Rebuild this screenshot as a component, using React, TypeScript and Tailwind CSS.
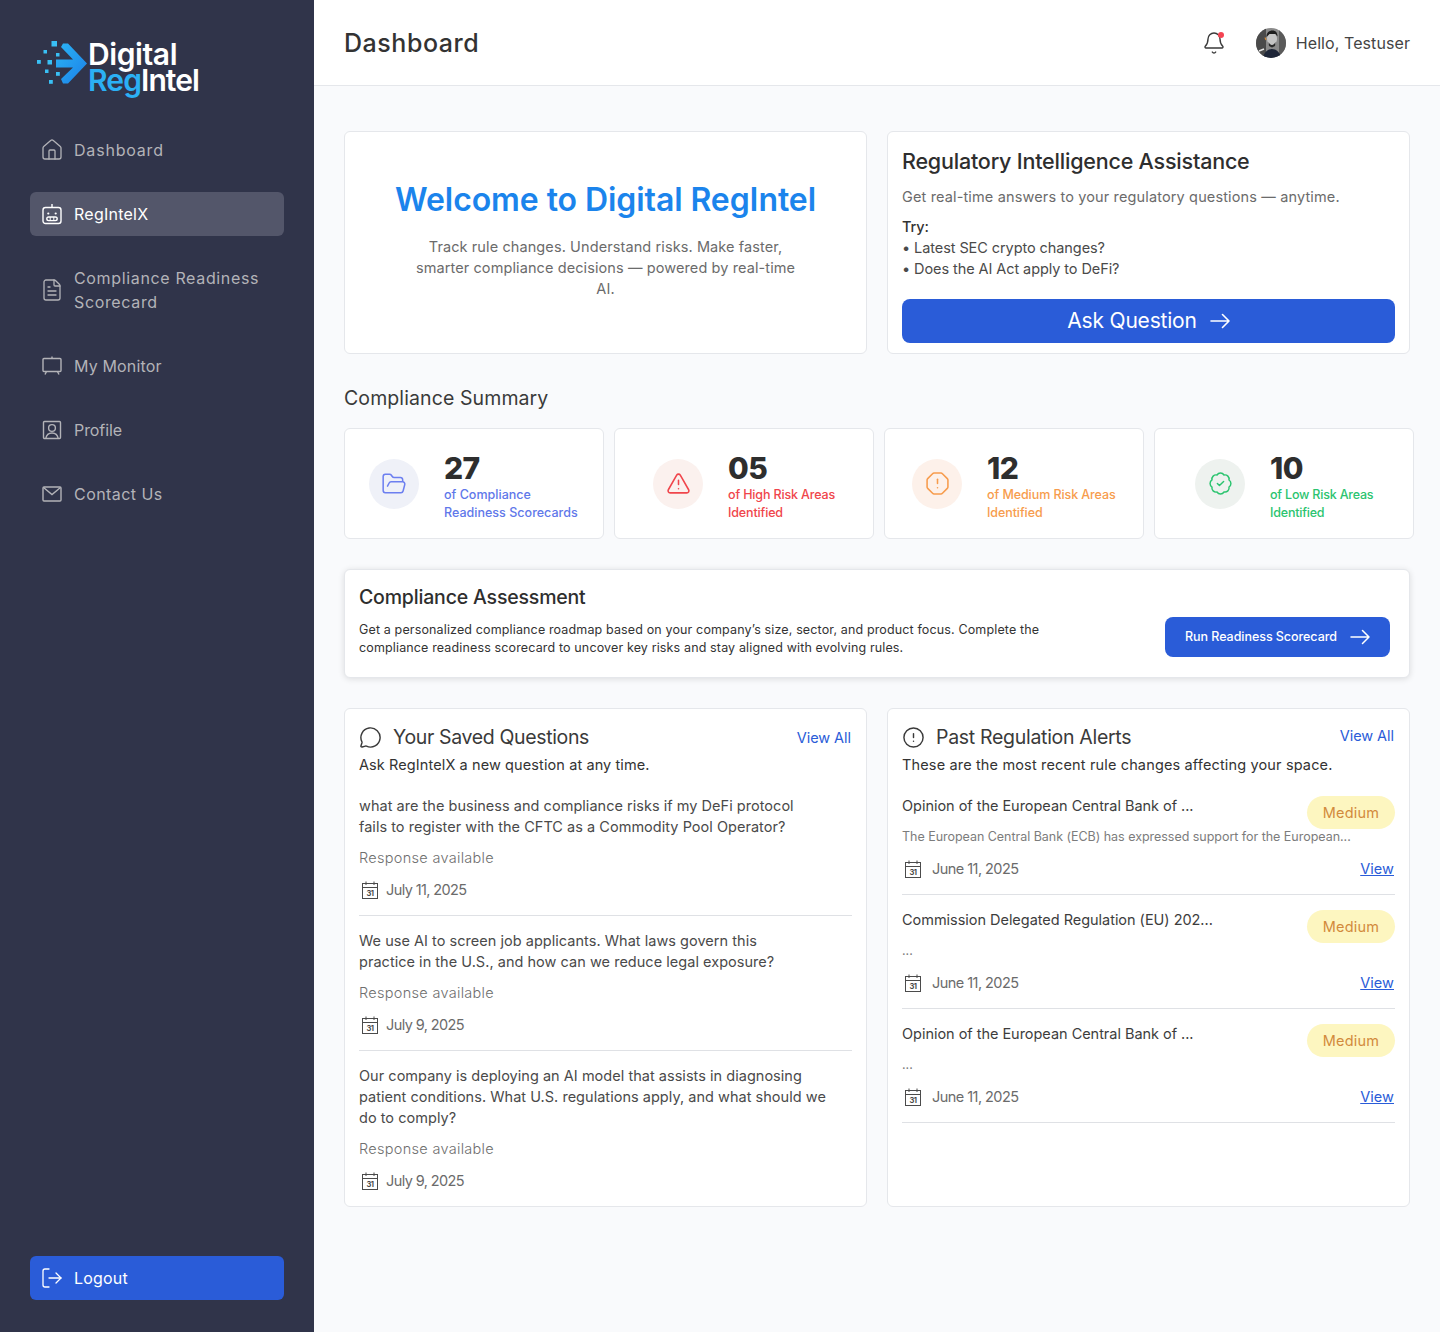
import React from "react";
import { LogOut, FolderOpen, TriangleAlert, OctagonAlert, BadgeCheck, Bell, MessageCircle, CircleAlert, House, FileText } from "lucide-react";

const Cal = () => (
  <svg width="20" height="20" viewBox="0 0 20 20" fill="none" stroke="#4b4b4b" strokeWidth="1" className="shrink-0">
    <rect x="2.5" y="3.5" width="15" height="15" />
    <path d="M2.5 7.5h15M6 1.5v3.5M14 1.5v3.5" />
    <text x="10" y="15.8" textAnchor="middle" fontSize="7.5" fontWeight="700" fill="#4b4b4b" stroke="none" fontFamily="Inter, sans-serif">31</text>
  </svg>
);

const Arrow = ({ strokeWidth = 1.6 }: { strokeWidth?: number }) => (
  <svg width="20" height="16" viewBox="0 0 20 16" fill="none" stroke="currentColor" strokeWidth={strokeWidth} strokeLinecap="round" strokeLinejoin="round" className="shrink-0">
    <path d="M1 8h18M12.500 1.500 19 8l-6.500 6.500" />
  </svg>
);

const BotIcon = () => (
  <svg width="20" height="22" viewBox="0 0 20 22" fill="none" stroke="currentColor" strokeWidth="1.4">
    <rect x="1" y="4.5" width="18" height="16" rx="2.5" />
    <path d="M10 1v3.5" />
    <circle cx="6.3" cy="10.5" r="1.1" fill="currentColor" stroke="none" />
    <circle cx="13.7" cy="10.5" r="1.1" fill="currentColor" stroke="none" />
    <rect x="4.8" y="14" width="10.4" height="3.6" rx="1.8" />
    <path d="M8.2 14v3.6M11.8 14v3.6" strokeWidth="1" />
  </svg>
);

const MonitorIcon = () => (
  <svg width="20" height="20" viewBox="0 0 20 20" fill="none" stroke="currentColor" strokeWidth="1.4">
    <rect x="1" y="2.5" width="18" height="13" rx="1" />
    <path d="M10 .5v2M4.5 15.500 3 18.500M15.500 15.500l1.500 3" />
  </svg>
);

const ProfileIcon = () => (
  <svg width="20" height="20" viewBox="0 0 20 20" fill="none" stroke="currentColor" strokeWidth="1.4">
    <rect x="1.5" y="1.5" width="17" height="17" rx="1" />
    <circle cx="10" cy="8" r="3.4" />
    <path d="M3.800 18.500c.6-3.600 3-5.500 6.200-5.500s5.600 1.900 6.200 5.500" />
  </svg>
);

const MailIcon = () => (
  <svg width="20" height="16" viewBox="0 0 20 16" fill="none" stroke="currentColor" strokeWidth="1.4">
    <rect x="1" y="1" width="18" height="14" rx="1" />
    <path d="m1.500 1.500 8.500 7 8.500-7" />
  </svg>
);

const Logo = () => (
  <svg width="52" height="50" viewBox="0 0 52 50" className="shrink-0">
    <defs>
      <linearGradient id="lg" x1="0" y1="0" x2="1" y2="1">
        <stop offset="0" stopColor="#2bb5f5" />
        <stop offset="1" stopColor="#1b7fe8" />
      </linearGradient>
    </defs>
    <path d="M26 2.500 31 2.500 50 22.500 31 42.500 26 42.500 24 38 36 26.500 19 26.500 19 18.500 36 18.500 24 6Z" fill="url(#lg)" />
    <g fill="#39c0f5">
      <rect x="14.500" y="0" width="5.500" height="5.500" />
      <rect x="6.500" y="9" width="3.500" height="3.500" />
      <rect x="19" y="12" width="3.500" height="3.500" />
      <rect x="0" y="19" width="3.800" height="3.800" />
      <rect x="10.500" y="19" width="4.500" height="4.500" />
      <rect x="8" y="28.500" width="3.500" height="3.500" />
      <rect x="19" y="31" width="3.800" height="3.800" />
      <rect x="12" y="39" width="3.800" height="3.800" />
    </g>
  </svg>
);

const Avatar = () => (
  <svg width="30" height="30" viewBox="0 0 30 30" className="shrink-0 rounded-full">
    <rect width="30" height="30" fill="#8a8a8a" />
    <rect x="0" y="0" width="10" height="30" fill="#4a4a4a" />
    <rect x="23" y="0" width="7" height="30" fill="#5a5a5a" />
    <path d="M7 30c1-6 5-9 9-9s8 3 9 9Z" fill="#1e2638" />
    <ellipse cx="16" cy="11" rx="5" ry="6.500" fill="#c4c4c4" />
    <path d="M10.500 9c0-5 3-6.500 6-6.500s5 2 5 6l-2-2.500h-6Z" fill="#1d1d1d" />
    <path d="M12.500 14c2 4 5 4 7 0l-.5 4-3 1.500-3-1.500Z" fill="#2a2a2a" />
    <path d="M9 9.500 10 12" stroke="#d28c3c" strokeWidth="1.200" />
    <path d="M3 23l5-2" stroke="#e5e5e5" strokeWidth="1.500" />
  </svg>
);

const navItem = "flex items-center gap-3 rounded-md px-3 py-[10px] text-[16px] leading-[24px]";
const bigIcon = "-m-[2px] shrink-0";

const Stat = ({ icon, bg, num, lines, color, pad }: { icon: React.ReactNode; bg: string; num: string; lines: string[]; color: string; pad: string }) => (
  <div className={`flex h-[111px] w-[260px] items-center rounded-md border border-[#e5e7eb] bg-white ${pad}`}>
    <div className={`flex h-[50px] w-[50px] shrink-0 items-center justify-center rounded-full ${bg}`}>{icon}</div>
    <div className="ml-[25px] pt-[8px]">
      <div className="h-[30px] text-[30px] font-extrabold leading-[30px] tracking-[-0.6px] text-[#2e2e2e]">{num}</div>
      <div className={`mt-[3px] text-[12.500px] font-medium leading-[18px] ${color}`}>
        {lines.map((l) => <div key={l}>{l}</div>)}
      </div>
    </div>
  </div>
);

const Question = ({ q, date, border }: { q: string[]; date: string; border?: boolean }) => (
  <div className={border ? "border-b border-[#dfe1e5] pb-[14px]" : ""}>
    <div className="text-[14.500px] leading-[21px] tracking-[0.03px] text-[#4a4a4a]">
      {q.map((l) => <div key={l}>{l}</div>)}
    </div>
    <div className="mt-[10px] text-[14.500px] font-light leading-[21px] tracking-[0.3px] text-[#6f6f6f]">Response available</div>
    <div className="mt-[11px] flex h-[22px] items-center gap-[6px] pl-[1px] text-[14.500px] tracking-[-0.6px] text-[#6b6b6b]"><Cal />{date}</div>
  </div>
);

const Alert = ({ title, desc }: { title: string; desc: string }) => (
  <div className="mb-[15px] h-[99px] border-b border-[#dfe1e5]">
    <div className="flex items-start justify-between">
      <div className="-mt-[1px] text-[14.500px] leading-[21px] tracking-[-0.03px] text-[#3d3d3d]">{title}</div>
      <span className="flex h-[33px] w-[88px] items-center justify-center rounded-full bg-[#fdf6c0] text-[14.500px] tracking-[0.2px] text-[#d28a3c]">Medium</span>
    </div>
    <div className="-mt-[1px] h-[18px] text-[12.500px] leading-[18px] tracking-[-0.03px] text-[#7c7c7c]">{desc}</div>
    <div className="mt-[12px] flex items-center justify-between">
      <div className="flex items-center gap-[9px] pl-[1px] text-[14.500px] tracking-[-0.55px] text-[#6b6b6b]"><Cal />June 11, 2025</div>
      <a className="mr-[1px] text-[14.500px] tracking-[0.05px] text-[#2a5cd8] underline">View</a>
    </div>
  </div>
);

export default function App() {
  return (
    <div className="flex min-h-[1332px] bg-[#f9fafc] font-['Inter',sans-serif]">
      <aside className="flex w-[314px] shrink-0 flex-col bg-[#30344a] px-[30px] pb-[32px] pt-[41px]">
        <div className="flex items-start pl-[7px]">
          <Logo />
          <div className="-ml-[1px] text-[30px] font-semibold leading-[26px] tracking-[-0.4px] text-white">
            <div>Digital</div>
            <div className="tracking-[-0.9px]"><span className="text-[#2bb0f5]">Reg</span>Intel</div>
          </div>
        </div>
        <nav className="mt-[35px] flex flex-col gap-[20px] text-[#b3b3b8]">
          <a className={`${navItem} tracking-[0.8px]`}><House size={24} strokeWidth={1.3} className={bigIcon} />Dashboard</a>
          <a className={`${navItem} bg-[#53566a] tracking-[0.25px] text-white`}><BotIcon />RegIntelX</a>
          <a className={`${navItem} tracking-[0.65px]`}><FileText size={24} strokeWidth={1.3} className={bigIcon} /><span>Compliance Readiness<br />Scorecard</span></a>
          <a className={`${navItem} tracking-[0.15px]`}><MonitorIcon />My Monitor</a>
          <a className={`${navItem} tracking-[-0.08px]`}><ProfileIcon />Profile</a>
          <a className={`${navItem} tracking-[0.45px]`}><MailIcon />Contact Us</a>
        </nav>
        <a className={`${navItem} mt-auto bg-[#2a5cd8] tracking-[0.2px] text-white`}><LogOut size={24} strokeWidth={1.3} className={bigIcon} />Logout</a>
      </aside>

      <div className="flex min-w-0 flex-1 flex-col">
        <header className="flex h-[86px] items-center justify-between border-b border-[#e5e7eb] bg-white px-[30px]">
          <h1 className="pt-[2px] text-[25px] font-medium tracking-[0.55px] text-[#333]">Dashboard</h1>
          <div className="flex items-center">
            <div className="relative mr-[30px] text-[#3a3a3a]">
              <Bell size={24} strokeWidth={1.4} />
              <span className="absolute right-[2px] top-[1px] h-[6px] w-[6px] rounded-full bg-[#f44352]" />
            </div>
            <Avatar />
            <span className="ml-[10px] text-[16px] tracking-[0.08px] text-[#444]">Hello, Testuser</span>
          </div>
        </header>

        <main className="px-[30px] pt-[45px]">
          <section className="grid grid-cols-2 gap-[20px]">
            <div className="flex h-[223px] flex-col items-center rounded-md border border-[#e5e7eb] bg-white pt-[48px] text-center">
              <h2 className="text-[32px] font-semibold leading-[40px] tracking-[-0.08px] text-[#1b84ec]">Welcome to Digital RegIntel</h2>
              <p className="mt-[16px] w-[400px] text-[14.500px] leading-[21px] tracking-[0.1px] text-[#6b6b6b]">Track rule changes. Understand risks. Make faster, smarter compliance decisions — powered by real-time AI.</p>
            </div>
            <div className="flex h-[223px] flex-col rounded-md border border-[#e5e7eb] bg-white px-[14px] pt-[14px]">
              <h2 className="text-[21.500px] font-medium leading-[30px] tracking-[-0.2px] text-[#2e2e2e]">Regulatory Intelligence Assistance</h2>
              <p className="mt-[10px] text-[14.500px] leading-[21px] tracking-[0.14px] text-[#6b6b6b]">Get real-time answers to your regulatory questions — anytime.</p>
              <div className="mt-[9px] text-[14.500px] leading-[21px] tracking-[-0.08px] text-[#4a4a4a]">
                <div className="font-medium text-[#333]">Try:</div>
                <div>• Latest SEC crypto changes?</div>
                <div>• Does the AI Act apply to DeFi?</div>
              </div>
              <button className="mt-[20px] flex h-[44px] items-center justify-center gap-[13px] rounded-lg bg-[#2a5cd8] text-[21px] tracking-[-0.2px] text-white">Ask Question <Arrow /></button>
            </div>
          </section>

          <h2 className="mt-[31px] text-[19.500px] leading-[26px] tracking-[0.1px] text-[#3a3a3a]">Compliance Summary</h2>

          <section className="mt-[17px] flex w-[1070px] gap-[10px]">
            <Stat pad="pl-[24px]" bg="bg-[#eff1f8]" icon={<FolderOpen size={26} strokeWidth={1.4} className="text-[#6c7ff0]" />} num="27" lines={["of Compliance", "Readiness Scorecards"]} color="tracking-[0.02px] text-[#5f78ea]" />
            <Stat pad="pl-[38px]" bg="bg-[#fbf1ee]" icon={<TriangleAlert size={25} strokeWidth={1.5} className="text-[#f0454b]" />} num="05" lines={["of High Risk Areas", "Identified"]} color="tracking-[-0.15px] text-[#f0454b]" />
            <Stat pad="pl-[27px]" bg="bg-[#fdf1ea]" icon={<OctagonAlert size={25} strokeWidth={1.5} className="text-[#f79c4d]" />} num="12" lines={["of Medium Risk Areas", "Identified"]} color="tracking-[-0.08px] text-[#f79c4d]" />
            <Stat pad="pl-[40px]" bg="bg-[#eef2ef]" icon={<BadgeCheck size={25} strokeWidth={1.4} className="text-[#2bc46f]" />} num="10" lines={["of Low Risk Areas", "Identified"]} color="tracking-[-0.2px] text-[#2bc46f]" />
          </section>

          <section className="mt-[30px] flex h-[109px] justify-between rounded-md border border-[#e5e7eb] bg-white pl-[14px] pr-[19px] shadow-[0_1px_6px_rgba(0,0,0,0.12)]">
            <div className="pt-[13px]">
              <h2 className="text-[19.500px] font-medium leading-[28px] tracking-[-0.18px] text-[#2e2e2e]">Compliance Assessment</h2>
              <p className="mt-[10px] w-[720px] text-[12.500px] leading-[18px] tracking-[0.14px] text-[#333]">Get a personalized compliance roadmap based on your company’s size, sector, and product focus. Complete the compliance readiness scorecard to uncover key risks and stay aligned with evolving rules.</p>
            </div>
            <button className="mb-[20px] flex h-[40px] w-[225px] items-center justify-center gap-[13px] self-end rounded-lg bg-[#2a5cd8] text-[12.500px] font-medium tracking-[-0.05px] text-white">Run Readiness Scorecard <Arrow strokeWidth={1.5} /></button>
          </section>

          <section className="mt-[30px] grid grid-cols-2 gap-[20px]">
            <div className="h-[499px] rounded-md border border-[#e5e7eb] bg-white px-[14px] pt-[13px]">
              <div className="flex items-center justify-between">
                <div className="flex items-center gap-[11px] text-[19.500px] leading-[30px] tracking-[-0.35px] text-[#3a3a3a]"><MessageCircle size={23} strokeWidth={1.5} />Your Saved Questions</div>
                <a className="mr-[1px] mt-[2px] text-[14.500px] tracking-[-0.05px] text-[#2a5cd8]">View All</a>
              </div>
              <p className="mt-[2px] text-[14.500px] leading-[21px] tracking-[0.1px] text-[#333]">Ask RegIntelX a new question at any time.</p>
              <div className="mt-[20px] flex flex-col gap-[14px]">
                <Question border q={["what are the business and compliance risks if my DeFi protocol", "fails to register with the CFTC as a Commodity Pool Operator?"]} date="July 11, 2025" />
                <Question border q={["We use AI to screen job applicants. What laws govern this", "practice in the U.S., and how can we reduce legal exposure?"]} date="July 9, 2025" />
                <Question q={["Our company is deploying an AI model that assists in diagnosing", "patient conditions. What U.S. regulations apply, and what should we", "do to comply?"]} date="July 9, 2025" />
              </div>
            </div>
            <div className="h-[499px] rounded-md border border-[#e5e7eb] bg-white px-[14px] pt-[13px]">
              <div className="flex items-center justify-between">
                <div className="flex items-center gap-[11px] text-[19.500px] leading-[30px] tracking-[-0.3px] text-[#3a3a3a]"><CircleAlert size={23} strokeWidth={1.5} />Past Regulation Alerts</div>
                <a className="mr-[1px] -mt-[2px] text-[14.500px] tracking-[-0.05px] text-[#2a5cd8]">View All</a>
              </div>
              <p className="mt-[2px] text-[14.500px] leading-[21px] tracking-[0.15px] text-[#333]">These are the most recent rule changes affecting your space.</p>
              <div className="mt-[21px] flex flex-col">
                <Alert title="Opinion of the European Central Bank of ..." desc="The European Central Bank (ECB) has expressed support for the European..." />
                <Alert title="Commission Delegated Regulation (EU) 202..." desc="..." />
                <Alert title="Opinion of the European Central Bank of ..." desc="..." />
              </div>
            </div>
          </section>
        </main>
      </div>
    </div>
  );
}
